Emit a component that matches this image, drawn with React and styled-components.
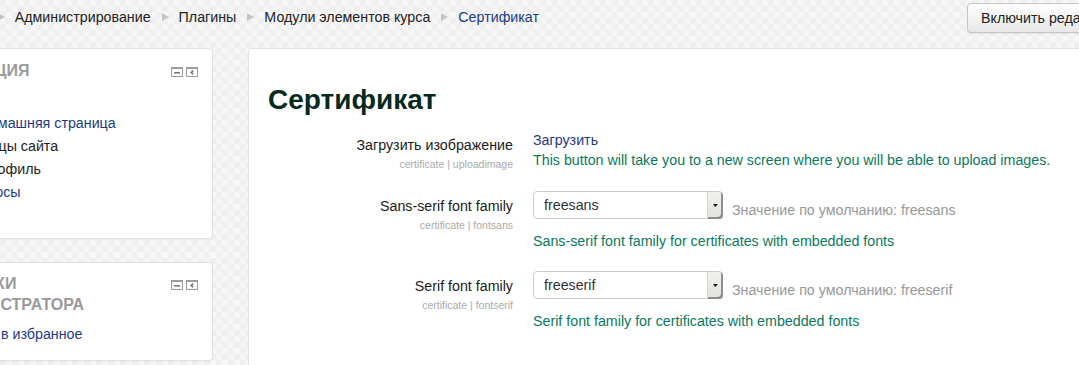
import React from 'react';
import styled, { createGlobalStyle } from 'styled-components';

const GlobalStyle = createGlobalStyle`
  html, body { margin: 0; padding: 0; }
  body {
    width: 1079px;
    height: 365px;
    overflow: hidden;
    font-family: "Liberation Sans", Arial, Helvetica, sans-serif;
    font-size: 14.25px;
    color: #222;
    background-color: #f3f3f3;
    background-image: conic-gradient(#f7f7f7 25%, #efefef 0 50%, #f5f5f5 0 75%, #f0f0f0 0);
    background-size: 12px 12px;
  }
`;

const Page = styled.div`
  margin-left: -82px;
  width: 1261px;
`;

const Header = styled.header`
  display: flex;
  align-items: flex-start;
  height: 48px;
  padding-left: 8px;
  box-sizing: border-box;
`;

const Breadcrumb = styled.nav`
  flex: 0 0 1041px;
  display: flex;
  align-items: center;
  margin-top: 7px;
  line-height: 20px;
  white-space: nowrap;
`;

const Crumb = styled.a`
  color: ${p => (p.$current ? '#1d3a86' : '#222')};
  text-decoration: none;
`;

const Sep = styled.span`
  display: inline-flex;
  margin: 0 10px 0 11px;
`;

const EditButton = styled.button`
  margin-top: 3px;
  height: 30px;
  padding: 0 13px;
  border: 1px solid #c6c6c6;
  border-radius: 4px;
  background: linear-gradient(#ffffff, #e7e7e7);
  box-shadow: 0 1px 1px rgba(0, 0, 0, 0.06);
  font-family: inherit;
  font-size: 14.25px;
  color: #222;
  white-space: nowrap;
`;

const Columns = styled.div`
  display: flex;
  align-items: flex-start;
  gap: 35px;
`;

const SideColumn = styled.aside`
  flex: 0 0 295px;
  display: flex;
  flex-direction: column;
  gap: 23px;
`;

const Block = styled.section`
  background: #fff;
  border: 1px solid #e1e1e1;
  border-radius: 4px;
  box-shadow: 0 1px 2px rgba(0, 0, 0, 0.03);
  padding: ${p => p.$pad};
`;

const BlockHeader = styled.div`
  display: flex;
  align-items: flex-start;
  gap: 10px;
`;

const BlockTitle = styled.h2`
  flex: 1;
  margin: 0;
  font-size: 16px;
  line-height: 21px;
  font-weight: bold;
  text-transform: uppercase;
  color: #9a9a9a;
`;

const BlockIcons = styled.div`
  display: flex;
  gap: 3px;
  margin-top: 7px;
`;

const NavList = styled.ul`
  list-style: none;
  margin: 8px 0 0;
  padding: 0;
`;

const NavItem = styled.li`
  padding-left: ${p => p.$indent}px;
  line-height: 23px;
  white-space: nowrap;
  color: ${p => (p.$link ? '#1d3a86' : '#222')};
`;

const MainPanel = styled.main`
  flex: 1;
  min-height: 420px;
  background: #fff;
  border: 1px solid #e1e1e1;
  border-radius: 4px;
  box-shadow: 0 1px 2px rgba(0, 0, 0, 0.03);
  padding: 31px 20px 40px 19px;
`;

const Title = styled.h1`
  margin: 0 0 10px;
  font-size: 28px;
  line-height: 40px;
  font-weight: bold;
  color: #062a20;
`;

const FormRow = styled.div`
  display: grid;
  grid-template-columns: 245px 1fr;
  column-gap: 20px;
  margin-bottom: 20px;
`;

const LabelCol = styled.div`
  text-align: right;
  padding-top: 5px;
`;

const Label = styled.label`
  display: block;
  line-height: 20px;
  color: #1a1a1a;
`;

const SubLabel = styled.div`
  margin-top: 3px;
  font-size: 10.5px;
  line-height: 13px;
  color: #aaa;
`;

const ControlCol = styled.div`
  white-space: nowrap;
`;

const UploadLink = styled.a`
  display: block;
  line-height: 20px;
  color: #1d3a86;
  text-decoration: none;
`;

const Description = styled.div`
  margin-top: ${p => p.$gap || 0}px;
  line-height: 20px;
  color: #087a5e;
`;

const ControlLine = styled.div`
  display: flex;
  align-items: flex-start;
  gap: 9px;
`;

const SelectWrap = styled.div`
  position: relative;
  width: 190px;
  height: 28px;
`;

const Select = styled.select`
  appearance: none;
  -webkit-appearance: none;
  width: 100%;
  height: 28px;
  box-sizing: border-box;
  border: 1px solid #cbcbcb;
  border-radius: 4px;
  background: #fff;
  padding: 0 20px 0 10px;
  font-family: inherit;
  font-size: 14.25px;
  color: #333;
  outline: none;
`;

const SelectArrow = styled.span`
  position: absolute;
  top: 1px;
  right: 0;
  bottom: 0;
  width: 15px;
  display: flex;
  align-items: center;
  justify-content: center;
  background: linear-gradient(#f2f0ed, #e4e2de);
  border-left: 1px solid #d6d4d0;
  border-radius: 0 4px 4px 0;
  box-shadow: inset -2px -2px 0 #8d8d8d;
  pointer-events: none;
`;

const DefaultText = styled.span`
  margin-top: 9px;
  line-height: 20px;
  color: #999;
`;

const Triangle = () => (
  <svg width="7" height="8" viewBox="0 0 7 8">
    <polygon points="0,0 7,4 0,8" fill="#c4c4c4" />
  </svg>
);

const MinIcon = () => (
  <svg width="12" height="10" viewBox="0 0 12 10">
    <rect x="0.5" y="0.5" width="11" height="9" fill="#fff" stroke="#9c9c9c" />
    <rect x="0" y="0" width="12" height="2" fill="#9c9c9c" />
    <rect x="3" y="5" width="6" height="1.6" fill="#7a7a7a" />
  </svg>
);

const DockIcon = () => (
  <svg width="12" height="10" viewBox="0 0 12 10">
    <rect x="0.5" y="0.5" width="11" height="9" fill="#fff" stroke="#9c9c9c" />
    <rect x="0" y="0" width="12" height="2" fill="#9c9c9c" />
    <path d="M7.2 3.6 L5.2 5.4 L7.2 7.2" fill="none" stroke="#6f6f6f" strokeWidth="1.5" />
  </svg>
);

const Arrow = () => (
  <svg width="5" height="3" viewBox="0 0 5 3">
    <polygon points="0,0 5,0 2.5,3" fill="#111" />
  </svg>
);

const crumbs = ['В начало', 'Администрирование', 'Плагины', 'Модули элементов курса', 'Сертификат'];

const SelectField = ({ value, def }) => (
  <ControlLine>
    <SelectWrap>
      <Select defaultValue={value}>
        <option value={value}>{value}</option>
      </Select>
      <SelectArrow><Arrow /></SelectArrow>
    </SelectWrap>
    <DefaultText>Значение по умолчанию: {def}</DefaultText>
  </ControlLine>
);

export default function App() {
  return (
    <>
      <GlobalStyle />
      <Page>
        <Header>
          <Breadcrumb>
            {crumbs.map((c, i) => (
              <React.Fragment key={c}>
                {i > 0 && <Sep><Triangle /></Sep>}
                <Crumb href="#" $current={i === crumbs.length - 1}>{c}</Crumb>
              </React.Fragment>
            ))}
          </Breadcrumb>
          <EditButton>Включить редактирование</EditButton>
        </Header>
        <Columns>
          <SideColumn>
            <Block $pad="11px 14px 34px 10px">
              <BlockHeader>
                <BlockTitle>Навигация</BlockTitle>
                <BlockIcons><MinIcon /><DockIcon /></BlockIcons>
              </BlockHeader>
              <NavList>
                <NavItem $indent={0} $link>В начало</NavItem>
                <NavItem $indent={21} $link>Моя домашняя страница</NavItem>
                <NavItem $indent={21}>Страницы сайта</NavItem>
                <NavItem $indent={21}>Мой профиль</NavItem>
                <NavItem $indent={21} $link>Мои курсы</NavItem>
              </NavList>
            </Block>
            <Block $pad="10px 14px 14px 10px">
              <BlockHeader>
                <BlockTitle>Закладки администратора</BlockTitle>
                <BlockIcons><MinIcon /><DockIcon /></BlockIcons>
              </BlockHeader>
              <NavList>
                <NavItem $indent={5} $link>Добавить в избранное</NavItem>
              </NavList>
            </Block>
          </SideColumn>
          <MainPanel>
            <Title>Сертификат</Title>
            <FormRow>
              <LabelCol>
                <Label>Загрузить изображение</Label>
                <SubLabel>certificate | uploadimage</SubLabel>
              </LabelCol>
              <ControlCol>
                <UploadLink href="#">Загрузить</UploadLink>
                <Description>This button will take you to a new screen where you will be able to upload images.</Description>
              </ControlCol>
            </FormRow>
            <FormRow>
              <LabelCol>
                <Label>Sans-serif font family</Label>
                <SubLabel>certificate | fontsans</SubLabel>
              </LabelCol>
              <ControlCol>
                <SelectField value="freesans" def="freesans" />
                <Description $gap={11}>Sans-serif font family for certificates with embedded fonts</Description>
              </ControlCol>
            </FormRow>
            <FormRow>
              <LabelCol>
                <Label>Serif font family</Label>
                <SubLabel>certificate | fontserif</SubLabel>
              </LabelCol>
              <ControlCol>
                <SelectField value="freeserif" def="freeserif" />
                <Description $gap={11}>Serif font family for certificates with embedded fonts</Description>
              </ControlCol>
            </FormRow>
          </MainPanel>
        </Columns>
      </Page>
    </>
  );
}
